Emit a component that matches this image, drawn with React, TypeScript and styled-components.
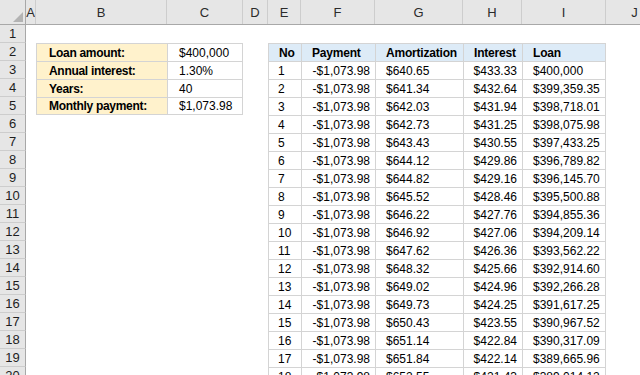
import React, { FunctionComponent } from 'react';
import styled, { createGlobalStyle, css } from 'styled-components';

const GlobalStyles = createGlobalStyle`
  html, body {
    margin: 0;
    padding: 0;
    background: #ffffff;
    overflow: hidden;
  }
  body {
    font-family: 'Liberation Sans', Arial, sans-serif;
    font-size: 12px;
    color: #000000;
  }
`;

const COLUMNS = '26px 10px 131px 76px 25px 33px 74px 88px 59px 84px 58px';
const LETTERS = ['A', 'B', 'C', 'D', 'E', 'F', 'G', 'H', 'I', 'J'];
const GRID = '#d4d4d4';

const Sheet = styled.div`
  width: 640px;
  height: 375px;
  overflow: hidden;
  background: #ffffff;
`;

const HeaderRow = styled.div`
  display: grid;
  grid-template-columns: ${COLUMNS};
  height: 25px;
  box-sizing: border-box;
  background: #e6e6e6;
  border-bottom: 1px solid #a8a8a8;
`;

const Corner = styled.div`
  display: flex;
  align-items: flex-end;
  justify-content: flex-end;
  padding: 0 2px 2px 0;
  border-right: 1px solid #a8a8a8;
`;

const ColHeader = styled.div`
  display: flex;
  align-items: center;
  justify-content: center;
  border-right: 1px solid #cdcdcd;
  color: #2b2b2b;
  font-size: 13px;
  padding-top: 1px;
  overflow: hidden;
`;

const Row = styled.div`
  display: grid;
  grid-template-columns: ${COLUMNS};
  height: 18px;
`;

const RowHeader = styled.div`
  display: flex;
  align-items: center;
  justify-content: center;
  background: #e6e6e6;
  border-right: 1px solid #a8a8a8;
  border-bottom: 1px solid #cdcdcd;
  box-sizing: border-box;
  color: #1e1e1e;
  font-size: 13px;
`;

type Kind = 'empty' | 'label' | 'value' | 'head' | 'body';

const Cell = styled.div<{
  $kind: Kind;
  $right?: boolean;
  $last?: boolean;
  $pad?: number;
}>`
  display: flex;
  align-items: center;
  box-sizing: border-box;
  white-space: nowrap;
  overflow: hidden;
  justify-content: ${({ $right }) => ($right ? 'flex-end' : 'flex-start')};
  padding: ${({ $right, $pad = 10 }) => ($right ? `0 5px 0 0` : `0 0 0 ${$pad}px`)};
  ${({ $kind }) => $kind !== 'empty' && css`
    border-left: 1px solid ${GRID};
    border-top: 1px solid ${GRID};
  `}
  ${({ $last }) => $last && css`
    border-right: 1px solid ${GRID};
  `}
  ${({ $kind }) => $kind === 'label' && css`
    background: #fff2cc;
    font-weight: bold;
    letter-spacing: -0.3px;
  `}
  ${({ $kind }) => $kind === 'head' && css`
    background: #ddebf7;
    font-weight: bold;
    letter-spacing: -0.2px;
  `}
`;

const BottomEdge = styled(Cell)`
  border-bottom: 1px solid ${GRID};
`;

const CornerMark: FunctionComponent = () => (
  <svg width="10" height="10" viewBox="0 0 10 10">
    <polygon points="10,0 10,10 0,10" fill="#b3b3b3" />
  </svg>
);

const summary: [string, string][] = [
  ['Loan amount:', '$400,000'],
  ['Annual interest:', '1.30%'],
  ['Years:', '40'],
  ['Monthly payment:', '$1,073.98'],
];

const schedule: [string, string, string][] = [
  ['$640.65', '$433.33', '$400,000'],
  ['$641.34', '$432.64', '$399,359.35'],
  ['$642.03', '$431.94', '$398,718.01'],
  ['$642.73', '$431.25', '$398,075.98'],
  ['$643.43', '$430.55', '$397,433.25'],
  ['$644.12', '$429.86', '$396,789.82'],
  ['$644.82', '$429.16', '$396,145.70'],
  ['$645.52', '$428.46', '$395,500.88'],
  ['$646.22', '$427.76', '$394,855.36'],
  ['$646.92', '$427.06', '$394,209.14'],
  ['$647.62', '$426.36', '$393,562.22'],
  ['$648.32', '$425.66', '$392,914.60'],
  ['$649.02', '$424.96', '$392,266.28'],
  ['$649.73', '$424.25', '$391,617.25'],
  ['$650.43', '$423.55', '$390,967.52'],
  ['$651.14', '$422.84', '$390,317.09'],
  ['$651.84', '$422.14', '$389,665.96'],
  ['$652.55', '$421.43', '$389,014.12'],
];

const PAYMENT = '-$1,073.98';

const SummaryCells: FunctionComponent<{ row: number }> = ({ row }) => {
  const item = summary[row - 2];
  if (!item) {
    return (
      <>
        <Cell $kind="empty" />
        <Cell $kind="empty" />
      </>
    );
  }
  const Wrap = row === 5 ? BottomEdge : Cell;
  return (
    <>
      <Wrap $kind="label" $pad={12}>{item[0]}</Wrap>
      <Wrap $kind="value" $last $pad={11}>{item[1]}</Wrap>
    </>
  );
};

const ScheduleCells: FunctionComponent<{ row: number }> = ({ row }) => {
  if (row < 2) {
    return (
      <>
        {[0, 1, 2, 3, 4].map((i) => <Cell key={i} $kind="empty" />)}
      </>
    );
  }
  if (row === 2) {
    return (
      <>
        <Cell $kind="head">No</Cell>
        <Cell $kind="head">Payment</Cell>
        <Cell $kind="head">Amortization</Cell>
        <Cell $kind="head">Interest</Cell>
        <Cell $kind="head" $last>Loan</Cell>
      </>
    );
  }
  const no = row - 2;
  const [amort, interest, loan] = schedule[no - 1];
  return (
    <>
      <Cell $kind="body" $pad={9}>{no}</Cell>
      <Cell $kind="body" $right>{PAYMENT}</Cell>
      <Cell $kind="body">{amort}</Cell>
      <Cell $kind="body" $right>{interest}</Cell>
      <Cell $kind="body" $last>{loan}</Cell>
    </>
  );
};

const rows = Array.from({ length: 20 }, (_, i) => i + 1);

const App: FunctionComponent = () => (
  <Sheet>
    <GlobalStyles />
    <HeaderRow>
      <Corner>
        <CornerMark />
      </Corner>
      {LETTERS.map((letter) => (
        <ColHeader key={letter}>{letter}</ColHeader>
      ))}
    </HeaderRow>
    {rows.map((row) => (
      <Row key={row}>
        <RowHeader>{row}</RowHeader>
        <Cell $kind="empty" />
        <SummaryCells row={row} />
        <Cell $kind="empty" />
        <ScheduleCells row={row} />
        <Cell $kind="empty" />
      </Row>
    ))}
  </Sheet>
);

App.displayName = 'App';

export default App;
